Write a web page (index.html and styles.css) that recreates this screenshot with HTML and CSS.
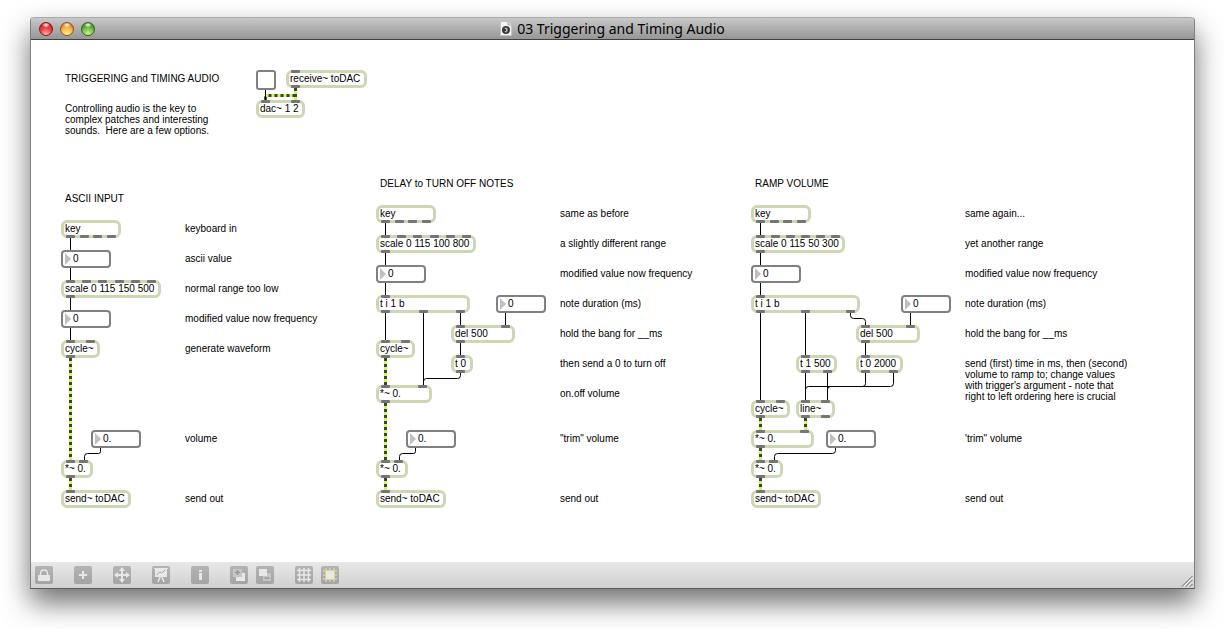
FILE: index.html
```
<!DOCTYPE html>
<html lang="en">
<head>
<meta charset="utf-8">
<title>03 Triggering and Timing Audio</title>
<link rel="stylesheet" href="styles.css">
</head>
<body>
<main class="window">
  <header class="titlebar">
    <div class="lights">
      <button class="light red" aria-label="Close"></button>
      <button class="light amber" aria-label="Minimize"></button>
      <button class="light green" aria-label="Zoom"></button>
    </div>
    <h1 class="title">
      <svg width="12" height="15" viewBox="0 0 12 15" aria-hidden="true">
        <path d="M.5.5h7.500l3.500 3.500v10.500H.5z" fill="#f4f4f4" stroke="#c4c4c4"/>
        <path d="M8 .5V4h3.500" fill="#ddd" stroke="#aaa"/>
        <circle cx="6" cy="9" r="4" fill="#3c3838"/>
        <path d="M4.800 7.500q2.400-1 2.400.5 0 1-1.200 1 1.500 0 1.200 1.200-.6 1.200-2.400.3" fill="none" stroke="#ddd"/>
      </svg>
      <span>03 Triggering and Timing Audio</span>
    </h1>
  </header>

  <div class="canvas">
    <svg class="cords" width="1163" height="522" viewBox="31 40 1163 522" aria-hidden="true">
      <g class="cord">
        <path d="M70.500 238V250M70.500 268V280M70.500 298V310M70.500 328V340"/>
        <path d="M100.500 448V451.500q0 2-2 2H87.500q-3 0-3 3V461"/>
        <path d="M385.500 223V235M385.500 253V265M385.500 283V295M385.500 313V340"/>
        <path d="M423.500 313V385M460.500 313V325M505.500 313V325M460.500 343V355"/>
        <path d="M460.500 373V375.500q0 3-3 3H426.500q-3 0-3 3V385"/>
        <path d="M415.500 448V451.500q0 2-2 2H402.500q-3 0-3 3V461"/>
        <path d="M760.500 223V235M760.500 253V265M760.500 283V295M760.500 313V400"/>
        <path d="M805.500 313V355M805.500 373V400M827.500 373V400M910.500 313V325M865.500 343V355"/>
        <path d="M850.500 313V315.500q0 3 3 3H862.500q3 0 3 3V325"/>
        <path d="M865.500 373V383.500q0 3-3 3H808.500q-3 0-3 3V400"/>
        <path d="M893.500 373V383.500q0 3-3 3H830.500q-3 0-3 3V400"/>
        <path d="M835.500 448V450.500q0 3-3 3H777.500q-3 0-3 3V461"/>
      </g>
      <g class="signal-base">
        <path id="signals" d="M295.500 88V101M295.500 95.500H268.500q-3 0-3 3V101M70.500 358V460M70.500 478V490M385.500 358V385M385.500 403V460M385.500 478V490M760.500 418V430M805.500 418V430M760.500 448V460M760.500 478V490"/>
      </g>
      <use class="signal-dash" href="#signals"/>
      <path class="cord" d="M265.500 89V101"/>
    </svg>

    <p class="note n-title">TRIGGERING and TIMING AUDIO</p>
    <p class="note n-intro">Controlling audio is the key to<br>complex patches and interesting<br>sounds.&nbsp; Here are a few options.</p>
    <input class="toggle" type="checkbox" aria-label="Audio on">
    <div class="obj receive"><span class="in"><i></i></span>receive~ toDAC<span class="out"><i></i></span></div>
    <div class="obj dac"><span class="in"><i></i><i></i></span>dac~ 1 2</div>

    <section class="patch ascii">
      <h2 class="note y190">ASCII INPUT</h2>
      <div class="obj y220 w60">key<span class="out"><i></i><i></i><i></i><i></i></span></div>
      <div class="num y250"><input type="text" value="0" aria-label="ascii value"></div>
      <div class="obj y280 w100"><span class="in"><i></i><i></i><i></i><i></i><i></i><i></i></span>scale 0 115 150 500<span class="out"><i></i></span></div>
      <div class="num y310"><input type="text" value="0" aria-label="modified value"></div>
      <div class="obj y340 w39"><span class="in"><i></i><i></i></span>cycle~<span class="out"><i></i></span></div>
      <div class="num y430 x30"><input type="text" value="0." aria-label="volume"></div>
      <div class="obj y460 w32"><span class="in"><i></i><i></i></span>*~ 0.<span class="out"><i></i></span></div>
      <div class="obj y490 w70"><span class="in"><i></i></span>send~ toDAC</div>
      <p class="note label y220">keyboard in</p>
      <p class="note label y250">ascii value</p>
      <p class="note label y280">normal range too low</p>
      <p class="note label y310">modified value now frequency</p>
      <p class="note label y340">generate waveform</p>
      <p class="note label y430">volume</p>
      <p class="note label y490">send out</p>
    </section>

    <section class="patch delay">
      <h2 class="note y175">DELAY to TURN OFF NOTES</h2>
      <div class="obj y205 w60">key<span class="out"><i></i><i></i><i></i><i></i></span></div>
      <div class="obj y235 w100"><span class="in"><i></i><i></i><i></i><i></i><i></i><i></i></span>scale 0 115 100 800<span class="out"><i></i></span></div>
      <div class="num y265"><input type="text" value="0" aria-label="modified value"></div>
      <div class="obj y295 w94"><span class="in"><i></i></span>t i 1 b<span class="out"><i></i><i></i><i></i></span></div>
      <div class="num y295 x120"><input type="text" value="0" aria-label="note duration"></div>
      <div class="obj y325 x75 w64"><span class="in"><i></i><i></i></span>del 500<span class="out"><i></i></span></div>
      <div class="obj y340 w39"><span class="in"><i></i><i></i></span>cycle~<span class="out"><i></i></span></div>
      <div class="obj y355 x75 w22"><span class="in"><i></i></span>t 0<span class="out"><i></i></span></div>
      <div class="obj y385 w56"><span class="in"><i></i><i></i></span>*~ 0.<span class="out"><i></i></span></div>
      <div class="num y430 x30"><input type="text" value="0." aria-label="trim volume"></div>
      <div class="obj y460 w32"><span class="in"><i></i><i></i></span>*~ 0.<span class="out"><i></i></span></div>
      <div class="obj y490 w70"><span class="in"><i></i></span>send~ toDAC</div>
      <p class="note label y205">same as before</p>
      <p class="note label y235">a slightly different range</p>
      <p class="note label y265">modified value now frequency</p>
      <p class="note label y295">note duration (ms)</p>
      <p class="note label y325">hold the bang for __ms</p>
      <p class="note label y355">then send a 0 to turn off</p>
      <p class="note label y385">on.off volume</p>
      <p class="note label y430">"trim" volume</p>
      <p class="note label y490">send out</p>
    </section>

    <section class="patch ramp">
      <h2 class="note y175">RAMP VOLUME</h2>
      <div class="obj y205 w60">key<span class="out"><i></i><i></i><i></i><i></i></span></div>
      <div class="obj y235 w94"><span class="in"><i></i><i></i><i></i><i></i><i></i><i></i></span>scale 0 115 50 300<span class="out"><i></i></span></div>
      <div class="num y265"><input type="text" value="0" aria-label="modified value"></div>
      <div class="obj y295 w109"><span class="in"><i></i></span>t i 1 b<span class="out"><i></i><i></i><i></i></span></div>
      <div class="num y295 x150"><input type="text" value="0" aria-label="note duration"></div>
      <div class="obj y325 x105 w64"><span class="in"><i></i><i></i></span>del 500<span class="out"><i></i></span></div>
      <div class="obj y355 x45 w41"><span class="in"><i></i></span>t 1 500<span class="out"><i></i><i></i></span></div>
      <div class="obj y355 x105 w47"><span class="in"><i></i></span>t 0 2000<span class="out"><i></i><i></i></span></div>
      <div class="obj y400 w39"><span class="in"><i></i><i></i></span>cycle~<span class="out"><i></i></span></div>
      <div class="obj y400 x45 w39"><span class="in"><i></i><i></i></span>line~<span class="out"><i></i><i></i></span></div>
      <div class="obj y430 w63"><span class="in"><i></i><i></i></span>*~ 0.<span class="out"><i></i></span></div>
      <div class="num y430 x75"><input type="text" value="0." aria-label="trim volume"></div>
      <div class="obj y460 w32"><span class="in"><i></i><i></i></span>*~ 0.<span class="out"><i></i></span></div>
      <div class="obj y490 w70"><span class="in"><i></i></span>send~ toDAC</div>
      <p class="note label y205">same again...</p>
      <p class="note label y235">yet another range</p>
      <p class="note label y265">modified value now frequency</p>
      <p class="note label y295">note duration (ms)</p>
      <p class="note label y325">hold the bang for __ms</p>
      <p class="note label y355">send (first) time in ms, then (second)<br>volume to ramp to; change values<br>with trigger's argument - note that<br>right to left ordering here is crucial</p>
      <p class="note label y430">'trim" volume</p>
      <p class="note label y490">send out</p>
    </section>
  </div>

  <footer class="toolbar">
    <button class="tool" aria-label="Lock"><svg viewBox="0 0 18 18"><path d="M5.500 9V7.500q0-3.500 3.500-3.500t3.500 3.500V9" fill="none" stroke="#e8e8e8" stroke-width="1.500"/><rect x="3" y="9" width="12" height="6" rx="1" fill="#e8e8e8"/></svg></button>
    <button class="tool" aria-label="New object"><svg viewBox="0 0 18 18"><path d="M9 5v8M5 9h8" stroke="#e8e8e8" stroke-width="2"/></svg></button>
    <button class="tool" aria-label="Move"><svg viewBox="0 0 18 18"><path d="M9 3v12M3 9h12" stroke="#e8e8e8" stroke-width="2"/><path d="M9 1l3 4H6zM9 17l3-4H6zM1 9l4-3v6zM17 9l-4-3v6z" fill="#e8e8e8"/></svg></button>
    <button class="tool" aria-label="Presentation"><svg viewBox="0 0 18 18"><path d="M2 2h14v1h-1v8H3V3H2z" fill="#e8e8e8"/><path d="M4.500 9l3-3 2 1 4-3" fill="none" stroke="#a8a8a8"/><path d="M8 11l-2 5M10 11l2 5" stroke="#e8e8e8" stroke-width="1.500"/></svg></button>
    <button class="tool" aria-label="Inspector"><svg viewBox="0 0 18 18"><path d="M8 4h3v2H8zM8 7h3v7H8z" fill="#e8e8e8"/></svg></button>
    <div class="pair">
      <button class="tool" aria-label="Bring to front"><svg viewBox="0 0 18 18"><rect x="6" y="7" width="9" height="8" fill="#e8e8e8"/><rect x="3" y="3" width="9" height="8" fill="#c6c6c6"/><path d="M7.500 4v5M5 6.500h5" stroke="#989898" stroke-width="1.500"/></svg></button>
      <button class="tool" aria-label="Send to back"><svg viewBox="0 0 18 18"><rect x="7" y="7" width="8" height="8" fill="#c6c6c6"/><path d="M8.500 12h5" stroke="#989898" stroke-width="1.500"/><rect x="3" y="3" width="8" height="7" fill="#e8e8e8"/></svg></button>
    </div>
    <div class="pair">
      <button class="tool" aria-label="Grid"><svg viewBox="0 0 18 18"><path d="M4.500 2v14M9 2v14M13.500 2v14M2 4.500h14M2 9h14M2 13.500h14" stroke="#e8e8e8" stroke-width="1.500"/></svg></button>
      <button class="tool" aria-label="Snap to object"><svg viewBox="0 0 18 18"><path d="M5 2v14M9 2v14M13 2v14M2 5h14M2 9h14M2 13h14" stroke="#d4d498" stroke-width="1.500"/><rect x="4.500" y="4.500" width="9" height="9" fill="#e8e8e8" stroke="#d4d498"/></svg></button>
    </div>
    <svg class="grip" width="12" height="12" viewBox="0 0 12 12" aria-hidden="true"><path d="M1 11.500L11.500 1M5 11.500L11.500 5M9 11.500L11.500 9" stroke="#666"/><path d="M2.500 11.500L11.500 2.500M6.500 11.500L11.500 6.500" stroke="#f4f4f4"/></svg>
  </footer>
</main>
</body>
</html>
```
FILE: styles.css
```
* {
  box-sizing: border-box;
}

body {
  margin: 0;
  padding: 17px 30px 40px;
  min-height: 100vh;
  display: flex;
  background: #fff;
  color: #000;
  font: 10px/11px "Liberation Sans", Arial, sans-serif;
}

.window {
  flex: 1;
  display: flex;
  flex-direction: column;
  background: #fff;
  border: 1px solid #808080;
  border-top: 0;
  border-bottom: 1px solid #5c5c5c;
  border-radius: 4px 4px 0 0;
  box-shadow: 0 14px 28px rgba(0, 0, 0, 0.56);
}

/* Title bar */
.titlebar {
  height: 23px;
  display: grid;
  grid-template-columns: 1fr auto 1fr;
  align-items: center;
  padding: 0 8px;
  background: linear-gradient(#c8c8c8, #969696);
  border-top: 1px solid #aaa;
  border-bottom: 1px solid #404040;
  border-radius: 4px 4px 0 0;
}

.lights {
  display: flex;
  gap: 7px;
}

.light {
  width: 14px;
  height: 14px;
  padding: 0;
  border: 1px solid;
  border-radius: 50%;
}

.red {
  border-color: #8a1414;
  background: radial-gradient(ellipse 4px 3px at 50% 15%, #fff, transparent), radial-gradient(circle at 50% 95%, #ffb4b4, #f04848 45%, #a80c14);
}

.amber {
  border-color: #94501c;
  background: radial-gradient(ellipse 4px 3px at 50% 15%, #fff, transparent), radial-gradient(circle at 50% 95%, #fff28c, #f8b848 50%, #b85410);
}

.green {
  border-color: #34601c;
  background: radial-gradient(ellipse 4px 3px at 50% 15%, #fff, transparent), radial-gradient(circle at 50% 95%, #ccf890, #78bc48 50%, #206410);
}

.title {
  display: flex;
  align-items: center;
  gap: 5px;
  margin: 0;
  font: 14px/20px "Noto Sans", sans-serif;
}

/* Patcher canvas */
.canvas {
  position: relative;
  flex: 1;
  min-height: 522px;
}

.cords {
  position: absolute;
  left: 0;
  top: 0;
  fill: none;
}

.cord {
  stroke: #000;
}

.signal-base {
  stroke-width: 3;
  color: #cdf567;
}

#signals {
  stroke: currentColor;
  stroke-width: 3;
}

.signal-dash {
  color: #3a4722;
  stroke-dasharray: 3 3;
}

.patch {
  position: absolute;
  top: 0;
}

.ascii { left: 30px; }
.delay { left: 345px; }
.ramp { left: 720px; }

.note {
  position: absolute;
  margin: 0;
  padding: 3px 4px;
  font: inherit;
  white-space: nowrap;
}

.ascii .label { left: 120px; }
.delay .label { left: 180px; }
.ramp .label { left: 210px; }

.n-title { left: 30px; top: 30px; }
.n-intro { left: 30px; top: 60px; }

.obj {
  position: absolute;
  height: 18px;
  padding: 0 1px;
  border: 3px solid #cdd7b3;
  border-radius: 6px;
  background: #fff;
  line-height: 12px;
  white-space: nowrap;
}

.in,
.out {
  position: absolute;
  left: 2px;
  right: 2px;
  display: flex;
  justify-content: space-between;
}

.in { top: -3px; }
.out { bottom: -3px; }

.in i,
.out i {
  width: 9px;
  height: 3px;
  border-radius: 1px;
  background: #757575;
}

.num {
  position: absolute;
  display: flex;
  align-items: center;
  gap: 2px;
  width: 50px;
  height: 18px;
  padding: 0 2px;
  border: 2px solid #808080;
  border-radius: 4px;
  background: #fff;
}

.num::before {
  content: "";
  flex: none;
  border: 6px solid transparent;
  border-left-color: #c0c0c0;
  border-right: 0;
}

.num input {
  width: 100%;
  min-width: 0;
  height: 14px;
  padding: 0 0 2px;
  border: 0;
  background: none;
  color: inherit;
  font: inherit;
}

.toggle {
  position: absolute;
  left: 225px;
  top: 30px;
  width: 20px;
  height: 20px;
  margin: 0;
  appearance: none;
  border: 2px solid #808080;
  border-radius: 3px;
  background: #fff;
}

.receive { left: 255px; top: 30px; width: 81px; }
.dac { left: 225px; top: 60px; width: 49px; }

/* Canvas rows */
.y175 { top: 135px; }
.y190 { top: 150px; }
.y205 { top: 165px; }
.y220 { top: 180px; }
.y235 { top: 195px; }
.y250 { top: 210px; }
.y265 { top: 225px; }
.y280 { top: 240px; }
.y295 { top: 255px; }
.y310 { top: 270px; }
.y325 { top: 285px; }
.y340 { top: 300px; }
.y355 { top: 315px; }
.y385 { top: 345px; }
.y400 { top: 360px; }
.y430 { top: 390px; }
.y460 { top: 420px; }
.y490 { top: 450px; }

/* Offsets inside a patch */
.x30 { left: 30px; }
.x45 { left: 45px; }
.x75 { left: 75px; }
.x105 { left: 105px; }
.x120 { left: 120px; }
.x150 { left: 150px; }

/* Object widths */
.w22 { width: 22px; }
.w32 { width: 32px; }
.w39 { width: 39px; }
.w41 { width: 41px; }
.w47 { width: 47px; }
.w56 { width: 56px; }
.w60 { width: 60px; }
.w63 { width: 63px; }
.w64 { width: 64px; }
.w70 { width: 70px; }
.w94 { width: 94px; }
.w100 { width: 100px; }
.w109 { width: 109px; }

/* Toolbar */
.toolbar {
  position: relative;
  height: 26px;
  display: flex;
  align-items: center;
  gap: 21px;
  padding: 0 4px;
  background: linear-gradient(#e8e8e8, #d0d0d0);
}

.pair {
  display: flex;
  gap: 8px;
}

.tool {
  width: 18px;
  height: 18px;
  padding: 0;
  border: 0;
  border-radius: 2px;
  background: linear-gradient(#b4b4b4, #a4a4a4);
}

.tool svg {
  display: block;
}

.grip {
  position: absolute;
  right: 1px;
  bottom: 1px;
}
```
